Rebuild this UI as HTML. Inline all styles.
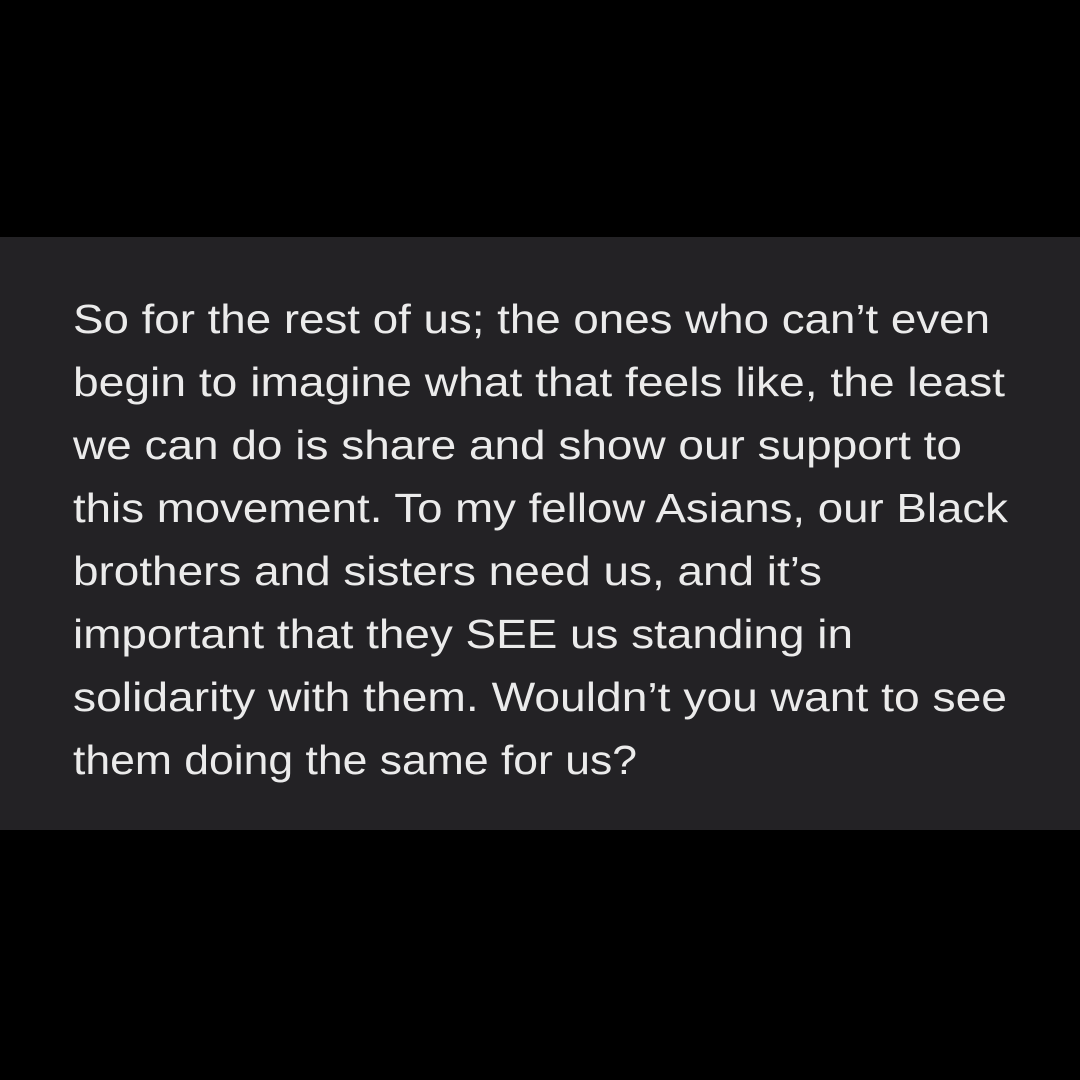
<!DOCTYPE html>
<html><head><meta charset="utf-8"><style>
html,body{margin:0;padding:0;background:#000;width:1080px;height:1080px;overflow:hidden}
.band{position:absolute;left:0;top:237px;width:1080px;height:593px;background:#232225}
svg{position:absolute;left:0;top:0}
text{font-family:"Liberation Sans",sans-serif;font-size:41px;fill:#ebebeb}
</style></head><body>
<div class="band"></div>
<svg width="1080" height="1080">
<text x="73" y="333" textLength="917" lengthAdjust="spacingAndGlyphs">So for the rest of us; the ones who can’t even</text>
<text x="73" y="396" textLength="932" lengthAdjust="spacingAndGlyphs">begin to imagine what that feels like, the least</text>
<text x="73" y="459" textLength="889" lengthAdjust="spacingAndGlyphs">we can do is share and show our support to</text>
<text x="73" y="522" textLength="935" lengthAdjust="spacingAndGlyphs">this movement. To my fellow Asians, our Black</text>
<text x="73" y="585" textLength="749" lengthAdjust="spacingAndGlyphs">brothers and sisters need us, and it’s</text>
<text x="73" y="648" textLength="780" lengthAdjust="spacingAndGlyphs">important that they SEE us standing in</text>
<text x="73" y="711" textLength="934" lengthAdjust="spacingAndGlyphs">solidarity with them. Wouldn’t you want to see</text>
<text x="73" y="774" textLength="564" lengthAdjust="spacingAndGlyphs">them doing the same for us?</text>
</svg>
</body></html>
